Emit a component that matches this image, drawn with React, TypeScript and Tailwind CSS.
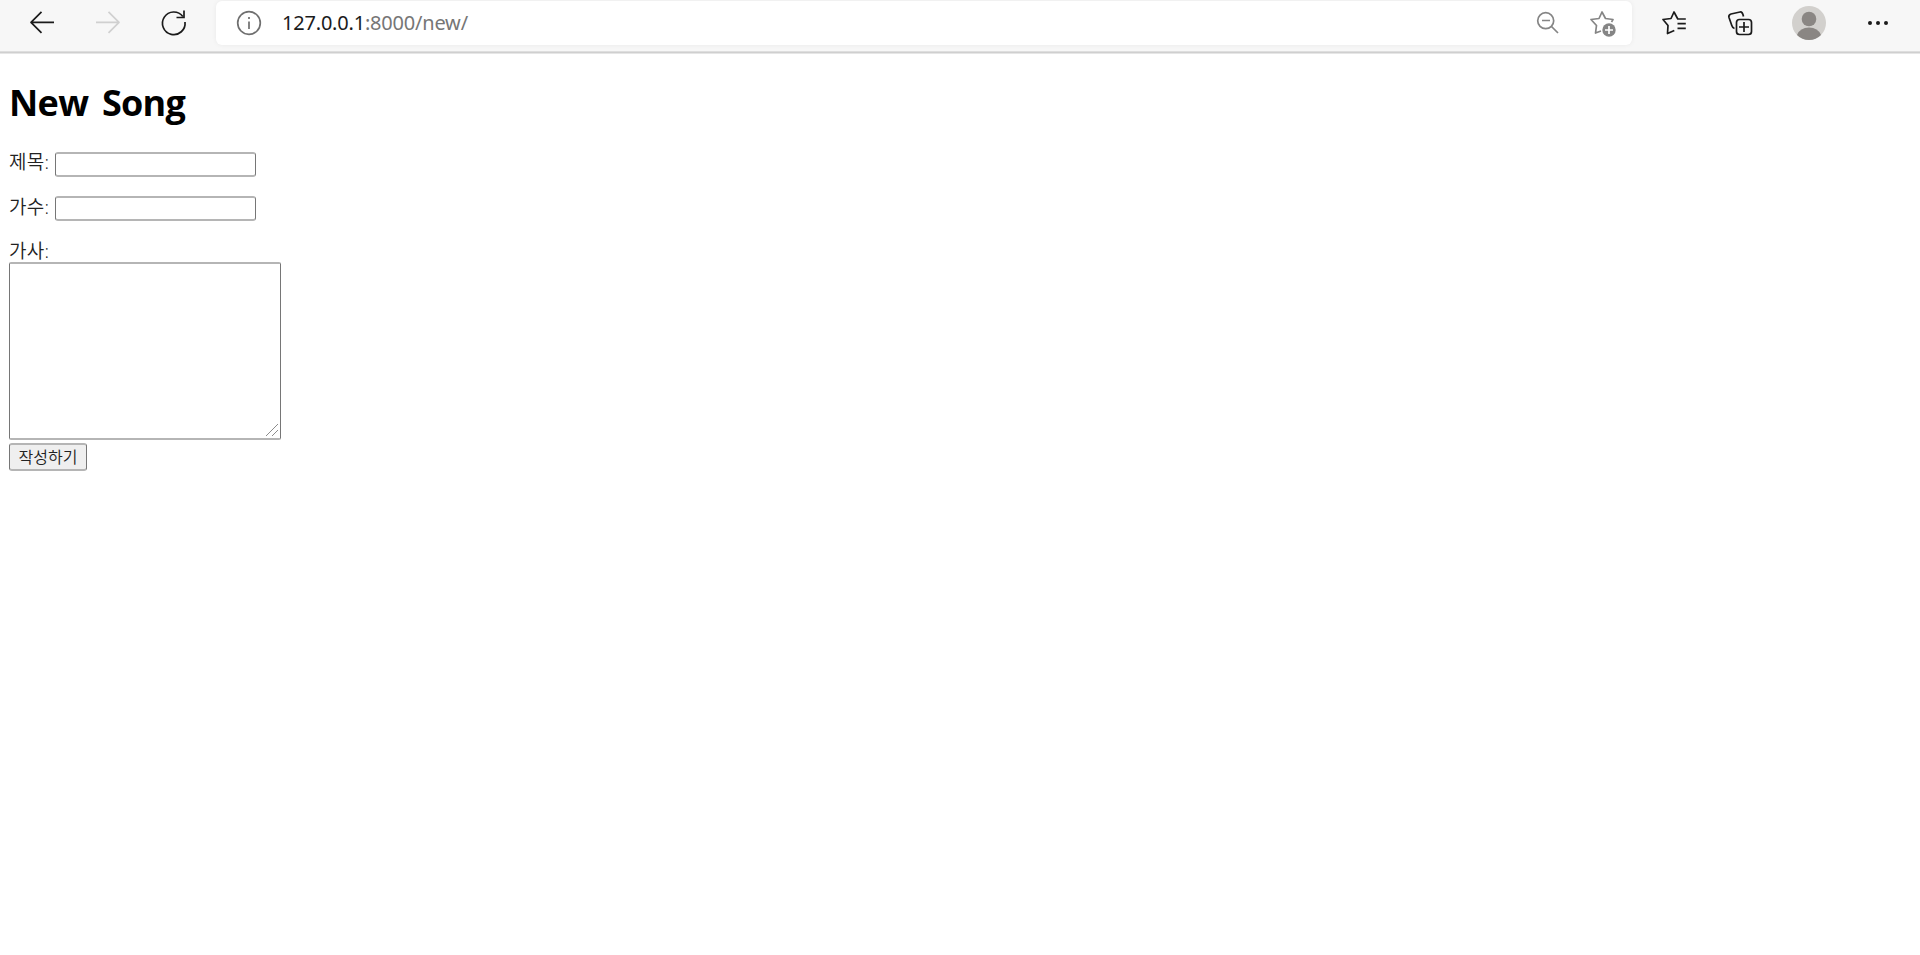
import { ReactNode, useState } from "react";

const Icon = ({
  className,
  children,
}: {
  className: string;
  children: ReactNode;
}) => (
  <svg
    viewBox="0 0 40 40"
    fill="none"
    stroke="currentColor"
    strokeWidth="1.7"
    strokeLinejoin="round"
    className={`h-10 w-10 shrink-0 ${className}`}
  >
    {children}
  </svg>
);

const Toolbar = () => {
  return (
    <header className="flex h-[54px] items-start border-b border-[#e6e6e6] bg-[#f7f7f7] pl-[22px] font-['Noto_Sans','Open_Sans',sans-serif] shadow-[inset_0_-1px_#cfcfcf,inset_0_-2px_#dedede]">
      <button aria-label="Back" className="mt-0.5 mr-[26px]">
        <Icon className="text-[#1b1b1b]">
          <path d="M32 20.3H9M19.5 9.8 9 20.3l10.5 10.5" />
        </Icon>
      </button>
      <button aria-label="Forward" className="mt-0.5 mr-[26px]" disabled>
        <Icon className="text-[#d0d0d0]">
          <path d="M8 20.3h23M20.5 9.8 31 20.3 20.5 30.8" />
        </Icon>
      </button>
      <button aria-label="Refresh" className="mt-0.5 mr-[22px]">
        <Icon className="text-[#1b1b1b]">
          <path d="M31 20A11.3 11.3 0 1 1 28.8 14.5" />
          <path d="M30 8.5v7h-7.5" strokeLinejoin="miter" />
        </Icon>
      </button>
      <div className="mt-px flex h-11 w-[1416px] items-center rounded-md bg-white pl-[13px] shadow-[0_0_5px_rgba(0,0,0,0.06)]">
        <Icon className="text-[#6f6f6f]">
          <circle cx="20" cy="20" r="11.3" />
          <path d="M20 18.5V26M20 14v2" />
        </Icon>
        <span className="ml-[13px] w-[1249px] text-[20px] leading-6 tracking-[-0.2px] text-[#767676]">
          <span className="text-[#1b1b1b]">127.0.0.1</span>:8000/new/
        </span>
        <Icon className="text-[#858585]">
          <circle cx="14.7" cy="17.7" r="8" />
          <path d="M11 17.5h8M20.5 23.5l6.5 6.5" />
        </Icon>
        <Icon className="ml-3.5 text-[#858585]">
          <path d="M16 28 10.5 30l1-7.5L6 16.5l8-1L17 9l3.5 6.5 7.5 1-1.5 2.5" />
          <circle cx="24" cy="27" r="6.7" fill="currentColor" stroke="none" />
          <path d="M24 23v8M20 27h8" stroke="white" />
        </Icon>
      </div>
      <button aria-label="Favorites" className="mt-0.5 ml-6">
        <Icon className="text-[#1b1b1b]">
          <path d="M18.3 28.5 11.5 31.5l.5-8-5-6 8-1L18 10l3.8 7h8M21.5 21.7h8.3M21.5 26.3h8.3" />
        </Icon>
      </button>
      <button aria-label="Collections" className="mt-0.5 ml-[26px]">
        <Icon className="text-[#1b1b1b]">
          <path d="M12.5 26.5Q10.5 26 9.8 23.5L7 15.5q-.8-2.500 2-3.500l9-2q2.500-.5 3.500 4.500" />
          <rect x="14.5" y="17.5" width="15" height="15" rx="3" />
          <path d="M22 20v10M17 25h10" />
        </Icon>
      </button>
      <button aria-label="Profile" className="mt-1.5 ml-[30px]">
        <svg viewBox="0 0 34 34" className="h-[34px] w-[34px]">
          <circle cx="17" cy="17" r="17" fill="#d2d0cd" />
          <circle cx="17" cy="13" r="7.3" fill="#8a8683" />
          <path d="M5 29q3-7.5 12-7.5T29 29q-5 5-12 5T5 29" fill="#8a8683" />
        </svg>
      </button>
      <button aria-label="Settings and more" className="mt-0.5 ml-8">
        <Icon className="text-[#1b1b1b]">
          <g fill="currentColor" stroke="none">
            <circle cx="12" cy="21" r="2" />
            <circle cx="20" cy="21" r="2" />
            <circle cx="28" cy="21" r="2" />
          </g>
        </Icon>
      </button>
    </header>
  );
};

const inputClass =
  "h-[25px] w-[201px] rounded-[3px] border-x border-y-2 border-x-[#767676] border-y-[#b5b5b5] px-1 text-base outline-none";

const labelClass =
  "w-[46px] text-[19px] leading-6 font-[350] tracking-[0.3px] whitespace-nowrap";

const NewSong = () => {
  const [song, setSong] = useState({ title: "", artist: "", lyrics: "" });

  const handleChange = (
    event: React.ChangeEvent<HTMLInputElement | HTMLTextAreaElement>
  ) => {
    const { name, value } = event.target;
    setSong({ ...song, [name]: value });
  };

  return (
    <form
      className="flex flex-col items-start pl-[9px] text-[#222]"
      onSubmit={(event) => event.preventDefault()}
    >
      <h1 className="mt-[22px] text-[36px] leading-[54px] font-bold tracking-[-0.7px] text-black [word-spacing:5px]">
        New Song
      </h1>
      <div className="mt-[22px] flex h-[25px]">
        <label htmlFor="title" className={`-mt-0.5 ${labelClass}`}>
          제목:
        </label>
        <input
          id="title"
          name="title"
          value={song.title}
          className={inputClass}
          onChange={handleChange}
        />
      </div>
      <div className="mt-[19px] flex h-[25px]">
        <label htmlFor="artist" className={`-mt-px ${labelClass}`}>
          가수:
        </label>
        <input
          id="artist"
          name="artist"
          value={song.artist}
          className={inputClass}
          onChange={handleChange}
        />
      </div>
      <label htmlFor="lyrics" className={`mt-[18px] h-[23px] ${labelClass}`}>
        가사:
      </label>
      <div className="relative h-[178px] w-[272px]">
        <textarea
          id="lyrics"
          name="lyrics"
          value={song.lyrics}
          className="block h-full w-full resize-none rounded-[2px] border-x border-y-2 border-x-[#767676] border-y-[#b5b5b5] p-0.5 text-base outline-none"
          onChange={handleChange}
        />
        <svg
          viewBox="0 0 14 14"
          className="pointer-events-none absolute right-0.5 bottom-[3px] h-3.5 w-3.5"
          stroke="#8c8c8c"
        >
          <path d="M1 13 13 1M7 13l6-6" />
        </svg>
      </div>
      <button className="mt-[3px] h-7 w-[78px] rounded-[3px] border-x border-y-2 border-x-[#767676] border-y-[#b5b5b5] bg-[#efefef] text-[16px] leading-5 font-[350] whitespace-nowrap">
        작성하기
      </button>
    </form>
  );
};

const App = () => {
  return (
    <div className="min-h-screen bg-white font-['Open_Sans','Noto_Sans_CJK_KR',sans-serif]">
      <Toolbar />
      <NewSong />
    </div>
  );
};

export default App;
